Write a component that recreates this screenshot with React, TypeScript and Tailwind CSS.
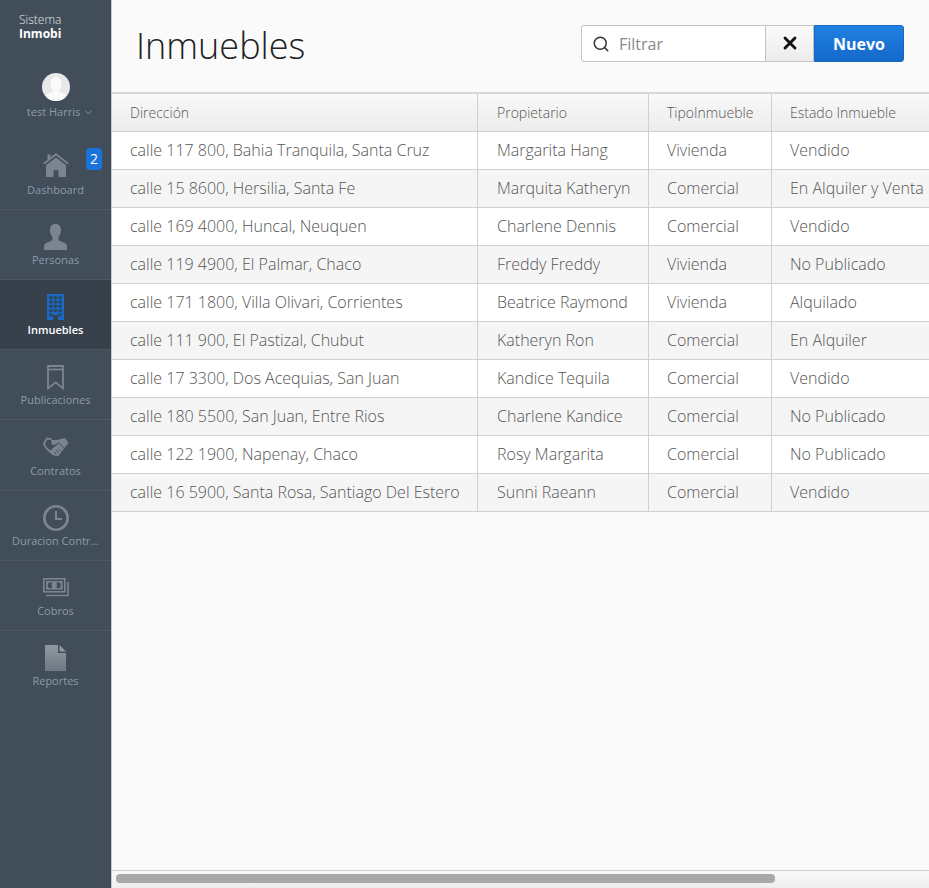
import { ChevronDown, Search, X } from 'lucide-react';
import type { ReactNode } from 'react';

const rows = [
  ['calle 117 800, Bahia Tranquila, Santa Cruz', 'Margarita Hang', 'Vivienda', 'Vendido'],
  ['calle 15 8600, Hersilia, Santa Fe', 'Marquita Katheryn', 'Comercial', 'En Alquiler y Venta'],
  ['calle 169 4000, Huncal, Neuquen', 'Charlene Dennis', 'Comercial', 'Vendido'],
  ['calle 119 4900, El Palmar, Chaco', 'Freddy Freddy', 'Vivienda', 'No Publicado'],
  ['calle 171 1800, Villa Olivari, Corrientes', 'Beatrice Raymond', 'Vivienda', 'Alquilado'],
  ['calle 111 900, El Pastizal, Chubut', 'Katheryn Ron', 'Comercial', 'En Alquiler'],
  ['calle 17 3300, Dos Acequias, San Juan', 'Kandice Tequila', 'Comercial', 'Vendido'],
  ['calle 180 5500, San Juan, Entre Rios', 'Charlene Kandice', 'Comercial', 'No Publicado'],
  ['calle 122 1900, Napenay, Chaco', 'Rosy Margarita', 'Comercial', 'No Publicado'],
  ['calle 16 5900, Santa Rosa, Santiago Del Estero', 'Sunni Raeann', 'Comercial', 'Vendido'],
];

const GREY = '#7a858f';

function HomeIcon() {
  return (
    <svg width="26" height="24" viewBox="0 0 26 24" fill={GREY} className="-mt-[4px]">
      <path d="M13 0 L17 3.2 L25.8 10 L24.8 11.4 L13 2.4 L1.2 11.4 L0.2 10 L4.5 6.7 V1.5 H7.5 V4.4 Z" />
      <path d="M13 4.5 L23 12.2 V24 H15.5 V17 H10.5 V24 H3 V12.2 Z" />
    </svg>
  );
}

function PersonIcon() {
  return (
    <svg width="23" height="26" viewBox="0 0 23 26" fill={GREY}>
      <path d="M11.5 0 C15.5 0 17 2.6 17 6.3 C17 9.6 15.7 12 14.4 13.4 V15 C14.4 16.6 16.5 17.2 18.4 17.9 C21.4 19 23 20 23 22.4 V26 H0 V22.4 C0 20 1.6 19 4.6 17.9 C6.5 17.2 8.6 16.6 8.6 15 V13.4 C7.3 12 6 9.6 6 6.3 C6 2.6 7.5 0 11.5 0 Z" />
    </svg>
  );
}

function BuildingIcon() {
  const cells = [];
  for (let r = 0; r < 5; r++) {
    for (let c = 0; c < 3; c++) {
      if (r === 4 && c === 1) continue;
      cells.push(<rect key={`${r}-${c}`} x={2.2 + c * 4.6} y={2.2 + r * 4.3} width="3.4" height="3" fill="#2e4460" />);
    }
  }
  return (
    <svg width="17" height="26" viewBox="0 0 17 26">
      <path d="M0 0 H17 V26 H11 V21 H6 V26 H0 Z" fill="#1b6bc4" />
      {cells}
    </svg>
  );
}

function BookmarkIcon() {
  return (
    <svg width="17" height="25" viewBox="0 0 17 25" fill="none" stroke={GREY} strokeWidth="1.8">
      <path d="M1 1 H16 V23.4 L8.5 17.4 L1 23.4 Z" />
      <path d="M1 4.5 H16" />
    </svg>
  );
}

function HandshakeIcon() {
  return (
    <svg width="26" height="20" viewBox="0 0 26 20" fill="none">
      <path d="M8.5 2.2 L4 1.4 L1 6.5 C1 9.5 4 12 7 14.5 L11 18" stroke={GREY} strokeWidth="1.8" />
      <path d="M8 3 L14 3 L22 1 L25.6 6 L21.5 11 L16 5.5 L11 8 C9.5 8.4 8 7 8.6 5.8 Z" fill={GREY} />
      <path d="M7 14 L10 11 L12.5 9 L16 6.5 L21 11.5 L15.5 19 C13.5 19.8 11 18.5 9 16.5 Z" fill={GREY} />
      <path d="M13 13 L16 16 M15 11.5 L18 14.5 M11 15 L13.5 17.5" stroke="#414d59" strokeWidth="0.9" />
    </svg>
  );
}

function ClockIcon() {
  return (
    <svg width="26" height="26" viewBox="0 0 26 26" fill="none" stroke={GREY}>
      <circle cx="13" cy="13" r="11.7" strokeWidth="2.6" />
      <path d="M13 6 V14 H19" strokeWidth="2.2" />
    </svg>
  );
}

function MoneyIcon() {
  return (
    <svg width="26" height="19" viewBox="0 0 26 19" fill="none" stroke={GREY}>
      <rect x="0.8" y="0.8" width="21" height="13" strokeWidth="1.6" />
      <path d="M25 4 V17.5 H3" strokeWidth="1.6" />
      <rect x="3" y="3" width="16.6" height="8.6" fill={GREY} stroke="none" />
      <ellipse cx="7.5" cy="7.3" rx="2.8" ry="3" fill="#414d59" stroke="none" />
      <ellipse cx="15" cy="7.3" rx="2.8" ry="3" fill="#414d59" stroke="none" />
      <ellipse cx="11.3" cy="7.3" rx="2.6" ry="4" fill={GREY} stroke="none" />
    </svg>
  );
}

function FileIcon() {
  return (
    <svg width="21" height="26" viewBox="0 0 21 26">
      <defs>
        <linearGradient id="file-fill" x1="0" y1="0" x2="0" y2="1">
          <stop offset="0" stopColor="#8f99a2" />
          <stop offset="1" stopColor="#6d7882" />
        </linearGradient>
      </defs>
      <path d="M0 0 H13 V8 H21 V26 H0 Z" fill="url(#file-fill)" />
      <path d="M14.5 0 L21 6.5 H14.5 Z" fill="#8f99a2" />
    </svg>
  );
}

function NavItem({ icon, label, active, last, badge }: { icon: ReactNode; label: string; active?: boolean; last?: boolean; badge?: boolean }) {
  return (
    <div className={`relative flex flex-col items-center h-[70.2px] shrink-0 ${last ? '' : 'border-b border-[#4d5863]'} ${active ? 'bg-[#37414c]' : ''}`}>
      {badge && (
        <span className="absolute right-[9px] top-[8px] w-4 h-[22px] rounded-sm bg-[#1a73d9] text-white text-[14px] leading-[22px] text-center">2</span>
      )}
      <div className="h-[42.3px] shrink-0 pt-[12px] flex items-center justify-center">{icon}</div>
      <div className={`text-[11px] leading-[16px] w-full text-center whitespace-nowrap ${active ? 'text-white font-semibold' : 'text-[#8c9bab]'}`}>{label}</div>
    </div>
  );
}

export default function App() {
  return (
    <div className="flex h-[888px] w-[929px] overflow-hidden bg-[#fafafa] font-['Open_Sans',sans-serif]">
      <aside className="w-[111px] shrink-0 bg-[#414d59] flex flex-col">
        <div className="pl-[19px] pt-[13px] h-[70px] text-[12px] leading-[14px] text-[#e6e9ec]">
          <div className="font-light">Sistema</div>
          <div className="font-bold text-white">Inmobi</div>
        </div>
        <div className="flex flex-col items-center h-[69.6px]">
          <div className="w-7 h-7 rounded-full bg-[#e8e8e8] mt-[3px] overflow-hidden">
            <svg width="28" height="28" viewBox="0 0 28 28" fill="#fafafa">
              <path d="M14 4 C18 4 19.5 7 19.5 10.5 C19.5 13.5 18 16 17 17 C17 19 21 19.5 24 22 V28 H4 V22 C7 19.5 11 19 11 17 C10 16 8.5 13.5 8.5 10.5 C8.5 7 10 4 14 4 Z" />
            </svg>
          </div>
          <div className="flex items-center gap-[3px] text-[11px] leading-[16px] mt-[3px] pl-[10px] text-[#8c9bab]">
            test Harris <ChevronDown size={11} strokeWidth={2} />
          </div>
        </div>
        <NavItem icon={<HomeIcon />} label="Dashboard" badge />
        <NavItem icon={<PersonIcon />} label="Personas" />
        <NavItem icon={<BuildingIcon />} label="Inmuebles" active />
        <NavItem icon={<BookmarkIcon />} label="Publicaciones" />
        <NavItem icon={<HandshakeIcon />} label="Contratos" />
        <NavItem icon={<ClockIcon />} label="Duracion Contr..." />
        <NavItem icon={<MoneyIcon />} label="Cobros" />
        <NavItem icon={<FileIcon />} label="Reportes" last />
      </aside>

      <main className="flex-1 min-w-0 flex flex-col border-l border-[#c8c8c8]">
        <header className="h-[92px] shrink-0 flex items-center justify-between pl-[24px] pr-[25px]">
          <h1 className="font-light text-[36px] leading-[44px] text-[#222]">Inmuebles</h1>
          <div className="flex h-[37px] -mt-[6px]">
            <div className="w-[185px] flex items-center gap-[9px] pl-[10px] pt-[1px] bg-white border border-[#c4c4c4] rounded-l-[3px]">
              <Search size={18} strokeWidth={2} className="text-[#333]" />
              <span className="text-[16px] text-[#888]">Filtrar</span>
            </div>
            <button className="w-[48px] flex items-center justify-center bg-gradient-to-b from-[#fafafa] to-[#ececec] border-y border-r border-[#c4c4c4]">
              <X size={20} strokeWidth={3.4} className="text-[#111]" />
            </button>
            <button className="w-[90px] pt-[2px] rounded-r-[3px] bg-gradient-to-b from-[#1f80e0] to-[#1569cb] border border-[#1766c0] text-white font-bold text-[16px]">Nuevo</button>
          </div>
        </header>

        <div className="flex-1 min-h-0 overflow-hidden flex flex-col border-t-2 border-[#d8d8d8]">
          <div className="flex-1 min-h-0 overflow-hidden">
            <div className="grid grid-cols-[366px_171px_123px_240px] w-[900px] h-[38px] bg-gradient-to-b from-[#f9f9f9] to-[#ececec] border-b border-[#d0d0d0] text-[14px] font-light text-[#555]">
              {['Dirección', 'Propietario', 'TipoInmueble', 'Estado Inmueble'].map((h, i) => (
                <div key={h} className={`flex items-center ${i === 1 ? 'pl-[19px]' : 'pl-[18px]'} ${i < 3 ? 'border-r border-[#d0d0d0]' : ''}`}>{h}</div>
              ))}
            </div>
            {rows.map((row, r) => (
              <div key={row[0]} className={`grid grid-cols-[366px_171px_123px_240px] w-[900px] h-[38px] border-b border-[#d0d0d0] text-[16px] font-light text-[#555] ${r % 2 === 0 ? 'bg-white' : 'bg-[#f5f5f5]'}`}>
                {row.map((cell, i) => (
                  <div key={i} className={`flex items-center whitespace-nowrap pb-[2px] ${i === 1 ? 'pl-[19px]' : 'pl-[18px]'} ${i < 3 ? 'border-r border-[#d0d0d0]' : ''}`}>{cell}</div>
                ))}
              </div>
            ))}
          </div>
          <div className="h-[18px] shrink-0 border-t border-[#d0d0d0] bg-gradient-to-b from-[#fafafa] to-[#eeeeee] pl-[4px] pt-[3px]">
            <div className="w-[659px] h-[9px] rounded-[4px] bg-[#a9a9a9]" />
          </div>
        </div>
      </main>
    </div>
  );
}
